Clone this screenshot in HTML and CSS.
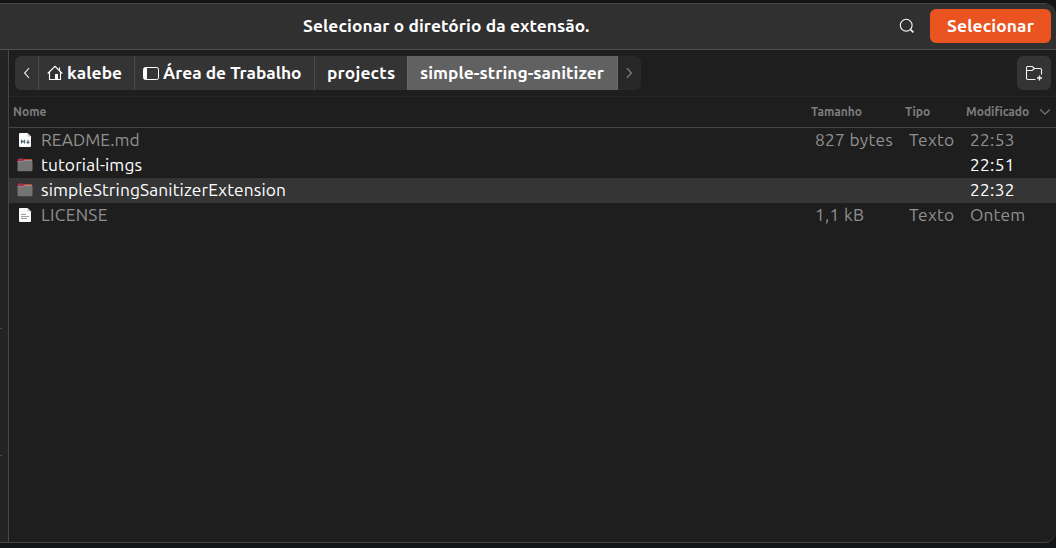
FILE: index.html
```html
<!DOCTYPE html>
<html lang="pt-BR">
<head>
<meta charset="utf-8">
<title>Selecionar o diretório da extensão.</title>
<link rel="stylesheet" href="styles.css">
</head>
<body>
<div class="window">
  <header class="titlebar">
    <h1 class="title">Selecionar o diretório da extensão.</h1>
    <svg class="search" width="16" height="16" viewBox="0 0 16 16" fill="none" stroke="#f4f4f4" stroke-width="1.1"><circle cx="7.2" cy="7.2" r="5.9"/><path d="M11.4 11.4l3 3" stroke-width="1.6"/></svg>
    <button class="select">Selecionar</button>
  </header>
  <div class="body">
    <aside class="sidebar"><i class="rule"></i><i class="rule"></i></aside>
    <main class="main">
      <nav class="toolbar">
        <div class="path">
          <button class="crumb back"><svg width="8" height="12" viewBox="0 0 8 12" fill="none" stroke="#e0e0e0" stroke-width="1.2"><path d="M6 1.2L1.6 6 6 10.8"/></svg></button>
          <button class="crumb home"><svg width="16" height="16" viewBox="0 0 16 16" fill="none" stroke="#fff" stroke-width="1.1"><path d="M.7 8.5L8 1.3l7.3 7.2M2.5 7v7.500h11V7M12.500 2.500v3"/><path d="M8 9h3v5.500H8z" fill="#fff" stroke="none"/></svg><span>kalebe</span></button>
          <button class="crumb desk"><svg width="16" height="13" viewBox="0 0 16 13" fill="none" stroke="#fff"><rect x=".5" y=".5" width="15" height="12" rx="1.8"/><path d="M1 1h3v11H1z" fill="#fff" stroke="none"/></svg><span>Área de Trabalho</span></button>
          <button class="crumb proj"><span>projects</span></button>
          <button class="crumb current"><span>simple-string-sanitizer</span></button>
          <button class="crumb next"><svg width="8" height="12" viewBox="0 0 8 12" fill="none" stroke="#858585" stroke-width="1.2"><path d="M2 1.200L6.400 6 2 10.800"/></svg></button>
        </div>
        <button class="newfolder"><svg width="18" height="16" viewBox="0 0 18 16" fill="none" stroke="#f2f2f2" stroke-width="1.1"><path d="M10.500 14.500H2.700Q1.500 14.500 1.500 13.300V2.500Q1.500 1.500 2.500 1.500H7.300L9.500 3.500H15.300Q16.500 3.500 16.500 4.700V9.500M1.500 5.500H7L9.500 3.500"/><path d="M14.500 10.500v5M12 13h5" stroke-width="1.4"/></svg></button>
      </nav>
      <div class="columns">
        <span>Nome</span><span>Tamanho</span><span>Tipo</span><span>Modificado</span>
        <svg class="sort" width="12" height="8" viewBox="0 0 12 8" fill="none" stroke="#777" stroke-width="1.2"><path d="M1.200 1.500L6 6.200l4.800-4.700"/></svg>
      </div>
      <div class="row dim">
        <svg width="16" height="16" viewBox="0 0 16 16"><path d="M3 1h7.500L14 4.500V14q0 1-1 1H3q-1 0-1-1V2q0-1 1-1z" fill="#fafafa"/><path d="M10.500 1v3.500H14z" fill="#c9c9c9"/><path d="M4.500 11.500V8.500L6 10l1.500-1.500v3M11 8v3M9.500 9.800L11 11.300l1.500-1.500" fill="none" stroke="#4d6472" stroke-width="1.1"/></svg>
        <span class="tight">README.md</span><span class="wide">827 bytes</span><span class="wide">Texto</span><span class="wide">22:53</span>
      </div>
      <div class="row">
        <svg width="16" height="16" viewBox="0 0 16 16"><path d="M7 2h7q1 0 1 1v2H7z" fill="#c9482f"/><path d="M.5 3q0-1.500 1.500-1.500H6L7.500 3v2h-7z" fill="#a83250"/><path d="M.5 4.500H6l1.200-1.200h7.300q1 0 1 1V13q0 1.300-1.300 1.300H1.800Q.5 14.300.5 13z" fill="#747474"/><path d="M.8 4.700H6l1.300-1.200h7.600" fill="none" stroke="#a2a2a2" stroke-width=".6"/></svg>
        <span>tutorial-imgs</span><span></span><span></span><span class="wide">22:51</span>
      </div>
      <div class="row selected">
        <svg width="16" height="16" viewBox="0 0 16 16"><path d="M7 2h7q1 0 1 1v2H7z" fill="#c9482f"/><path d="M.5 3q0-1.500 1.500-1.500H6L7.500 3v2h-7z" fill="#a83250"/><path d="M.5 4.500H6l1.200-1.200h7.300q1 0 1 1V13q0 1.300-1.300 1.300H1.800Q.5 14.300.5 13z" fill="#747474"/><path d="M.8 4.700H6l1.300-1.200h7.600" fill="none" stroke="#a2a2a2" stroke-width=".6"/></svg>
        <span>simpleStringSanitizerExtension</span><span></span><span></span><span class="wide">22:32</span>
      </div>
      <div class="row dim">
        <svg width="16" height="16" viewBox="0 0 16 16"><path d="M3 1h7.500L14 4.500V14q0 1-1 1H3q-1 0-1-1V2q0-1 1-1z" fill="#fafafa"/><path d="M10.500 1v3.500H14z" fill="#c9c9c9"/><path d="M4 7.500h5M4 9.500h8M4 11.500h6" stroke="#a0a0a0"/></svg>
        <span class="wide">LICENSE</span><span class="wide">1,1 kB</span><span class="wide">Texto</span><span>Ontem</span>
      </div>
    </main>
  </div>
</div>
</body>
</html>
```
FILE: styles.css
```css
* { box-sizing: border-box; }
body {
  margin: 0;
  height: 548px;
  padding: 3px 0 5px;
  overflow: hidden;
  background: #131415;
  color: #fff;
  font: 17.33px/24px Ubuntu, "Noto Sans", sans-serif;
  letter-spacing: .13px;
}
button { border: 0; margin: 0; padding: 0; font: inherit; font-weight: 700; color: inherit; letter-spacing: .04px; }
svg { flex: none; display: block; }
span { white-space: nowrap; }
.window {
  height: 540px;
  display: flex;
  flex-direction: column;
  overflow: hidden;
  background: #1e1e1e;
  border-top: 1px solid #454545;
  border-bottom: 1px solid #454545;
  border-radius: 0 12px 12px 0;
}
.titlebar {
  height: 46px;
  flex: none;
  display: flex;
  align-items: center;
  padding: 0 5px 1px 0;
  background: #303030;
  border-bottom: 1px solid #505050;
}
.title { flex: 1; margin: 0; padding-left: 303px; font-size: inherit; line-height: 24px; letter-spacing: .1px; }
.search { margin-right: 15px; }
.select { width: 121px; height: 34px; border-radius: 6px; background: #e95420; letter-spacing: .14px; }
.body { flex: 1; display: flex; min-height: 0; }
.sidebar { width: 9px; background: #242424; border-right: 1px solid #464646; padding-top: 278px; }
.rule { display: block; width: 2px; height: 1px; background: #484848; margin-bottom: 126px; }
.main { flex: 1; min-width: 0; }
.toolbar {
  height: 47px;
  display: flex;
  justify-content: space-between;
  padding: 6px 5px 6px 6px;
  border-bottom: 1px solid #262626;
}
.path { display: flex; height: 34px; border-radius: 6px; overflow: hidden; }
.crumb { display: flex; align-items: center; background: #343434; border-right: 1px solid #4b4b4b; }
.back { width: 24px; padding-left: 8px; }
.home { width: 96px; padding-left: 8px; gap: 4px; letter-spacing: .1px; }
.desk { width: 180px; padding-left: 8px; gap: 4px; letter-spacing: 0; }
.proj { width: 93px; padding-left: 12px; border-right-color: #6b6b6b; letter-spacing: .2px; }
.current { width: 210px; padding-left: 12px; background: #616161; border-right-color: #6b6b6b; }
.next { width: 23px; padding-left: 7px; background: #282828; border: 0; }
.newfolder { width: 34px; height: 34px; display: grid; place-items: center; background: #343434; border-radius: 6px; }
.columns {
  height: 31px;
  display: grid;
  grid-template-columns: 798px 94px 61px 73px 12px;
  align-items: center;
  padding-left: 4px;
  border-bottom: 1px solid #444;
  color: #7c7c7c;
  font-size: 12px;
  font-weight: 700;
  letter-spacing: 0;
}
.row {
  height: 25px;
  display: grid;
  grid-template-columns: 24px 774px 94px 61px 86px;
  grid-template-rows: 24px;
  align-items: center;
  padding-left: 8px;
}
.dim { color: #909090; }
.tight { letter-spacing: 0; }
.wide { letter-spacing: .28px; }
.selected { background: #353535; }
```
